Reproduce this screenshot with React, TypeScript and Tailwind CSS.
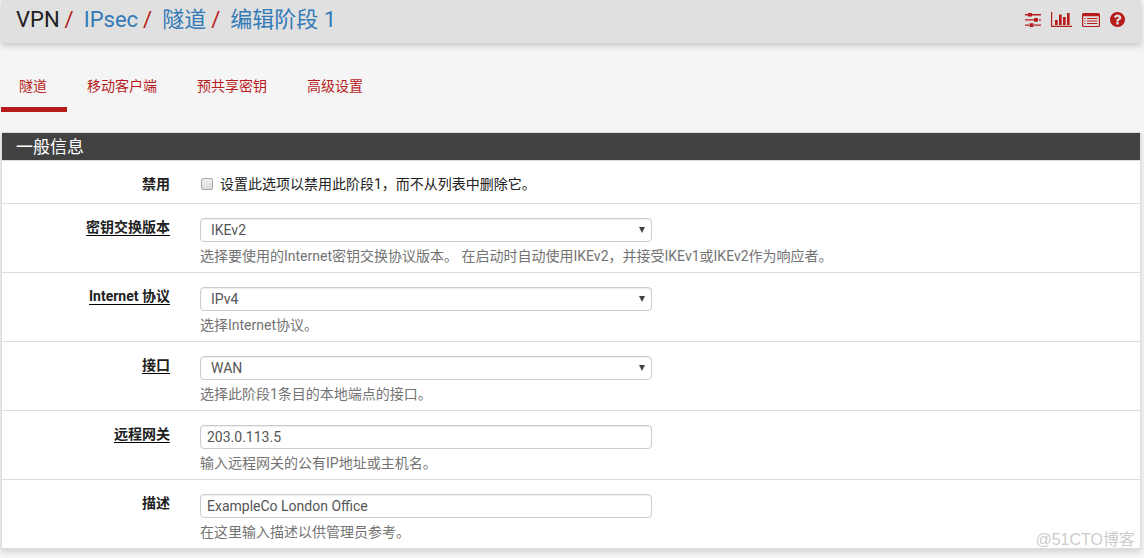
import type { ReactNode } from 'react';

const field =
  'block h-6 w-full max-w-[452px] rounded border border-[#ccc] bg-white text-sm text-[#555] shadow-[inset_0_1px_1px_rgba(0,0,0,0.075)] outline-none focus:border-[#66afe9]';

function Crumb({ children }: { children: ReactNode }) {
  return (
    <li className="flex">
      <span className="mr-2.5 ml-[5px] text-[#b71c1c]">/</span>
      <a href="#" className="text-[#337ab7]">
        {children}
      </a>
    </li>
  );
}

function SlidersIcon() {
  return (
    <svg viewBox="0 0 16 14" className="h-3.5 w-4 fill-current">
      <path d="M0 1h4v1.4H0zM6 1h10v1.4H6zM0 6.2h9v1.4H0zM14 6.2h2v1.4h-2zM0 11.4h4v1.4H0zM9 11.4h7v1.4H9z" />
      <rect x="3" y="0" width="4" height="3.6" rx="0.5" />
      <rect x="9" y="5.1" width="4" height="3.6" rx="0.5" />
      <rect x="4.500" y="10.3" width="4" height="3.6" rx="0.5" />
    </svg>
  );
}

function ChartIcon() {
  return (
    <svg viewBox="0 0 21 15" className="h-[15px] w-[21px] fill-current">
      <path d="M0 0h1.2v13.8H21V15H0z" />
      <path d="M4 8h2.7v5H4zM8 2.5h2.7v10.5H8zM12 5h2.7v8H12zM16 1h2.6v12H16z" />
    </svg>
  );
}

function ListIcon() {
  return (
    <svg viewBox="0 0 18 14" className="h-3.5 w-[18px] fill-current">
      <path
        fillRule="evenodd"
        d="M1.6 0h14.8A1.6 1.6 0 0 1 18 1.6v10.8a1.6 1.6 0 0 1-1.6 1.6H1.6A1.6 1.6 0 0 1 0 12.4V1.6A1.6 1.6 0 0 1 1.6 0zM1.2 3.2v9.2c0 .3.2.5.5.5h14.6c.3 0 .5-.2.5-.5V3.2z"
      />
      <path d="M2.4 5h1.2v1H2.4zM2.4 7.5h1.2v1H2.4zM2.4 10h1.2v1H2.4zM5 5h10.4v1H5zM5 7.5h10.400v1H5zM5 10h10.4v1H5z" />
    </svg>
  );
}

function HelpIcon() {
  return (
    <svg viewBox="0 0 1536 1536" className="size-[15px] fill-current">
      <path d="M896 1248v-192q0-14-9-23t-23-9h-192q-14 0-23 9t-9 23v192q0 14 9 23t23 9h192q14 0 23-9t9-23zM1152 576q0-88-55.500-163t-138.500-116-170-41q-243 0-371 213-15 24 8 42l132 100q7 6 19 6 16 0 25-12 53-68 86-92 34-24 86-24 48 0 85.500 26t37.500 59q0 38-20 61t-68 45q-63 28-115.500 86.500t-52.500 125.500v36q0 14 9 23t23 9h192q14 0 23-9t9-23q0-19 21.500-49.500t54.500-49.500q32-18 49-28.500t46-35 44.500-48 28-60.500 12.500-81zM1536 768q0 209-103 385.500t-279.500 279.500-385.500 103-385.500-103-279.500-279.500-103-385.500 103-385.500 279.500-279.500 385.500-103 385.500 103 279.500 279.500 103 385.500z" />
    </svg>
  );
}

function Row({
  id,
  label,
  required,
  help,
  children,
}: {
  id: string;
  label: string;
  required?: boolean;
  help: string;
  children: ReactNode;
}) {
  return (
    <div className="flex gap-[30px] border-t border-[#ddd] pb-1.5">
      <div className="w-[168px] shrink-0 pt-[13px] text-right leading-5 font-bold">
        <label
          htmlFor={id}
          className={required ? 'inline-block h-[19px] border-b border-black leading-5' : 'inline-block leading-5'}
        >
          {label}
        </label>
      </div>
      <div className="min-w-0 flex-1 pt-3.5 pr-4">
        {children}
        <p className="pt-1 leading-5 text-[#737373]">{help}</p>
      </div>
    </div>
  );
}

function SelectField({ id, value }: { id: string; value: string }) {
  return (
    <div className="relative max-w-[452px]">
      <select id={id} className={`${field} appearance-none pr-6 pl-2.5`}>
        <option>{value}</option>
      </select>
      <svg viewBox="0 0 6 6" className="pointer-events-none absolute top-[9px] right-[7px] size-1.5 fill-[#444]">
        <path d="M0 0h6L3 6z" />
      </svg>
    </div>
  );
}

const tabs = ['隧道', '移动客户端', '预共享密钥', '高级设置'];

const tools = [
  { name: '设置', icon: <SlidersIcon /> },
  { name: '图表', icon: <ChartIcon /> },
  { name: '日志', icon: <ListIcon /> },
  { name: '帮助', icon: <HelpIcon /> },
];

export default function App() {
  return (
    <div className="relative min-h-screen bg-[#f5f5f5] pr-[3px] pl-px font-[Roboto,'Noto_Sans_CJK_SC',sans-serif] text-sm text-[#212121]">
      <header className="flex h-[43px] items-center justify-between bg-[#e0e0e0] pr-4 pb-1 pl-[15px] shadow-[0_3px_6px_rgba(0,0,0,0.18)]">
        <nav>
          <ol className="flex text-[22px] leading-8">
            <li>VPN</li>
            <Crumb>IPsec</Crumb>
            <Crumb>隧道</Crumb>
            <Crumb>编辑阶段 1</Crumb>
          </ol>
        </nav>
        <ul className="flex items-center gap-2.5 text-[#b71c1c]">
          {tools.map((t) => (
            <li key={t.name}>
              <a href="#" aria-label={t.name} className="block">
                {t.icon}
              </a>
            </li>
          ))}
        </ul>
      </header>

      <nav className="pt-[23px]">
        <ul className="flex gap-0.5">
          {tabs.map((t, i) => (
            <li key={t}>
              <a
                href="#"
                className={`block border-b-[5px] pt-2.5 pr-5 pb-[11px] pl-[18px] leading-5 text-[#b71c1c] ${
                  i === 0 ? 'border-[#b71c1c]' : 'border-transparent'
                }`}
              >
                {t}
              </a>
            </li>
          ))}
        </ul>
      </nav>

      <main className="mt-5 border border-[#ddd] bg-white shadow-[0_3px_6px_rgba(0,0,0,0.14)]">
        <h2 className="bg-[#424242] px-3.5 pt-px text-[17px] leading-[26px] text-white">一般信息</h2>
        <form>
          <div className="flex items-center gap-[30px] border-t border-[#ddd] pt-[13px] pb-[9px] leading-5">
            <label htmlFor="disabled" className="w-[168px] shrink-0 text-right font-bold">
              禁用
            </label>
            <label className="flex items-center gap-[7px] pl-px">
              <input
                id="disabled"
                type="checkbox"
                className="size-3 shrink-0 appearance-none rounded-xs border border-[#a6a6a6] bg-linear-to-b from-[#eee] to-[#ddd] checked:from-[#777] checked:to-[#555]"
              />
              设置此选项以禁用此阶段1，而不从列表中删除它。
            </label>
          </div>
          <Row
            id="iketype"
            label="密钥交换版本"
            required
            help="选择要使用的Internet密钥交换协议版本。 在启动时自动使用IKEv2，并接受IKEv1或IKEv2作为响应者。"
          >
            <SelectField id="iketype" value="IKEv2" />
          </Row>
          <Row id="protocol" label="Internet 协议" required help="选择Internet协议。">
            <SelectField id="protocol" value="IPv4" />
          </Row>
          <Row id="interface" label="接口" required help="选择此阶段1条目的本地端点的接口。">
            <SelectField id="interface" value="WAN" />
          </Row>
          <Row id="gateway" label="远程网关" required help="输入远程网关的公有IP地址或主机名。">
            <input id="gateway" type="text" defaultValue="203.0.113.5" className={`${field} px-1.5`} />
          </Row>
          <Row id="descr" label="描述" help="在这里输入描述以供管理员参考。">
            <input id="descr" type="text" defaultValue="ExampleCo London Office" className={`${field} px-1.5`} />
          </Row>
        </form>
      </main>

      <span className="pointer-events-none absolute right-[9px] bottom-1.5 font-['Liberation_Sans','Noto_Sans_CJK_SC',sans-serif] text-base leading-6 text-[#ccc]">
        @51CTO博客
      </span>
    </div>
  );
}
